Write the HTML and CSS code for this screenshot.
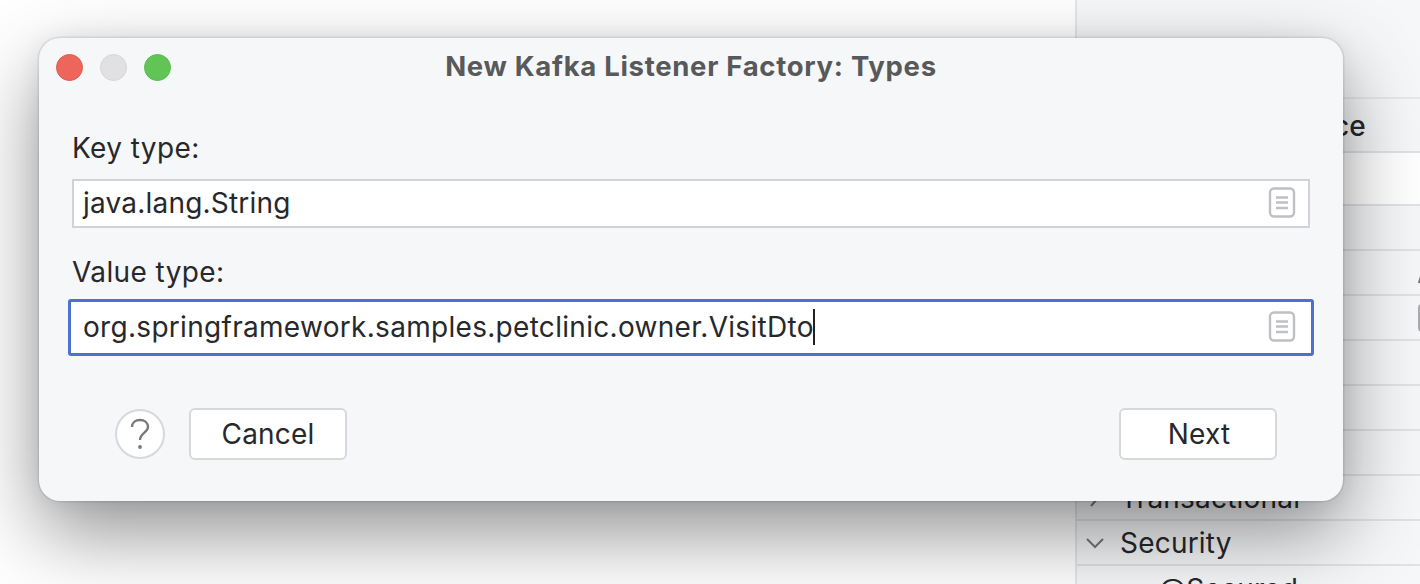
FILE: index.html
```
<!DOCTYPE html>
<html lang="en">
<head>
<meta charset="utf-8">
<title>New Kafka Listener Factory: Types</title>
<link rel="stylesheet" href="styles.css">
</head>
<body>
<div class="workspace">
  <main class="editor"></main>
  <aside class="panel">
    <div class="panel-top"></div>
    <div class="row row-header"><span>ce</span></div>
    <div class="row row-search"></div>
    <div class="row"></div>
    <div class="row row-edge"><svg class="edge-slash" viewBox="0 0 8 20"><path d="M1 19L7 1"/></svg></div>
    <div class="row row-edge"><span class="edge-box"></span></div>
    <div class="row"></div>
    <div class="row"></div>
    <div class="row"></div>
    <div class="row row-group">
      <svg class="chevron" viewBox="0 0 20 20"><path d="M6 2l7 8-7 8"/></svg>
      <span class="transactional">Transactional</span>
    </div>
    <div class="row row-group">
      <svg class="chevron" viewBox="0 0 20 20"><path d="M2 6l8 8 8-8"/></svg>
      <span class="security">Security</span>
    </div>
    <div class="row row-child"><span>@Secured</span></div>
  </aside>
</div>
<section class="dialog">
  <header class="titlebar">
    <div class="lights"><span class="light red"></span><span class="light gray"></span><span class="light green"></span></div>
    <h1 class="title"><span>New Kafka Listener Factory: Types</span></h1>
  </header>
  <div class="form">
    <label class="label">Key type:</label>
    <div class="field">
      <span class="value key-value">java.lang.String</span>
      <svg class="list-icon" viewBox="0 0 28 32"><rect x="2" y="1.500" width="24" height="28" rx="4"/><path d="M8 10.500h12M8 15.500h12M8 21h12"/></svg>
    </div>
    <label class="label label-second">Value type:</label>
    <div class="field focused">
      <span class="value">org.springframework.samples.petclinic.owner.VisitDto</span><span class="caret"></span>
      <svg class="list-icon" viewBox="0 0 28 32"><rect x="2" y="1.500" width="24" height="28" rx="4"/><path d="M8 10.500h12M8 15.500h12M8 21h12"/></svg>
    </div>
  </div>
  <footer class="actions">
    <button class="help" aria-label="Help"><svg viewBox="0 0 24 34"><path d="M4 10C4 5.500 7.500 3 12 3S20 5.500 20 10C20 15.500 12 16 12 23"/><circle cx="12" cy="30" r="1.900"/></svg></button>
    <button class="button">Cancel</button>
    <button class="button next">Next</button>
  </footer>
</section>
</body>
</html>
```
FILE: styles.css
```
* { box-sizing: border-box; }
body {
  margin: 0;
  width: 1420px;
  height: 584px;
  overflow: hidden;
  position: relative;
  background: #fff;
  font-family: Inter, "Liberation Sans", sans-serif;
  font-size: 28px;
  color: #27282b;
}
.workspace { display: flex; height: 584px; overflow: hidden; }
.editor { flex: 1; background: #fff; }
.panel { width: 345px; background: #f6f7f9; border-left: 2px solid #e4e6e9; }
.panel-top { height: 97px; }
.row { height: 45px; border-top: 2px solid #e1e2e5; display: flex; align-items: center; white-space: nowrap; letter-spacing: 0.2px; }
.row-header { height: 54px; border-color: #e6e9ec; padding: 2px 0 0 256px; font-weight: 500; letter-spacing: 0; }
.row-search { height: 53px; background: #fff; }
.row-edge { padding-left: 341px; overflow: hidden; }
.edge-slash { flex: none; width: 8px; height: 20px; margin-top: 2px; fill: none; stroke: #77797d; stroke-width: 2.4; }
.edge-box { flex: none; width: 24px; height: 28px; border: 2px solid #aaacb0; border-radius: 4px; }
.row-group { padding-left: 8px; gap: 15px; }
.chevron { width: 20px; height: 20px; fill: none; stroke: #77797d; stroke-width: 2; flex: none; }
.row-child { padding-left: 82px; padding-top: 3px; }

.dialog {
  position: absolute;
  left: 39px;
  top: 38px;
  width: 1304px;
  height: 463px;
  border-radius: 21px;
  background: #f6f7f9;
  box-shadow: 0 0 0 1.5px rgba(0,0,0,.08), 0 0 24px rgba(0,0,0,.06), 0 32px 80px rgba(0,0,0,.43);
}
.titlebar { height: 58px; padding-left: 17px; display: flex; align-items: center; }
.lights { display: flex; gap: 17px; width: 115px; }
.light { width: 27px; height: 27px; border-radius: 50%; border: 1px solid; }
.red { background: #ed655b; border-color: #d85c55; }
.gray { background: #e1e1e4; border-color: #d5d5d8; }
.green { background: #60c554; border-color: #59b94f; }
.title { flex: 1; margin: 0; padding: 0 132px 2px 0; text-align: center; font-size: 27.500px; line-height: 36px; font-weight: 700; letter-spacing: 0.7px; color: #58595b; }
.form { padding: 34px 33px 0; letter-spacing: 0.3px; }
.label { display: block; height: 36px; line-height: 36px; margin-bottom: 13px; letter-spacing: 0.4px; }
.label-second { margin-top: 26px; margin-bottom: 12px; }
.field { height: 49px; border: 2px solid #d2d3d8; background: #fff; display: flex; align-items: center; padding: 0 12px 2px 9px; }
.focused { height: 57px; margin: -3px -4px 0; border: 3px solid #4c72cc; border-radius: 3px; padding: 0 15px 2px 12px; }
.value { white-space: nowrap; }
.key-value { letter-spacing: 0.2px; }
.caret { width: 2px; height: 36px; background: #222; margin-left: -1px; }
.list-icon { width: 28px; height: 32px; margin-left: auto; fill: none; stroke: #bfc0c5; stroke-width: 2.4; }
.actions { display: flex; align-items: center; padding: 52px 66px 0 76px; }
.help { width: 50px; height: 50px; padding: 0; border-radius: 50%; border: 2px solid #d7d8db; background: #fff; display: grid; place-items: center; }
.help svg { width: 24px; height: 34px; fill: none; stroke: #77787b; stroke-width: 2.3; }
.help circle { fill: #77787b; stroke: none; }
.button { width: 158px; height: 52px; margin-left: 24px; padding: 0; border: 2px solid #d7d8db; border-radius: 6px; background: #fff; font: inherit; color: inherit; letter-spacing: 0.2px; }
.next { margin-left: auto; padding-left: 2px; }
```
